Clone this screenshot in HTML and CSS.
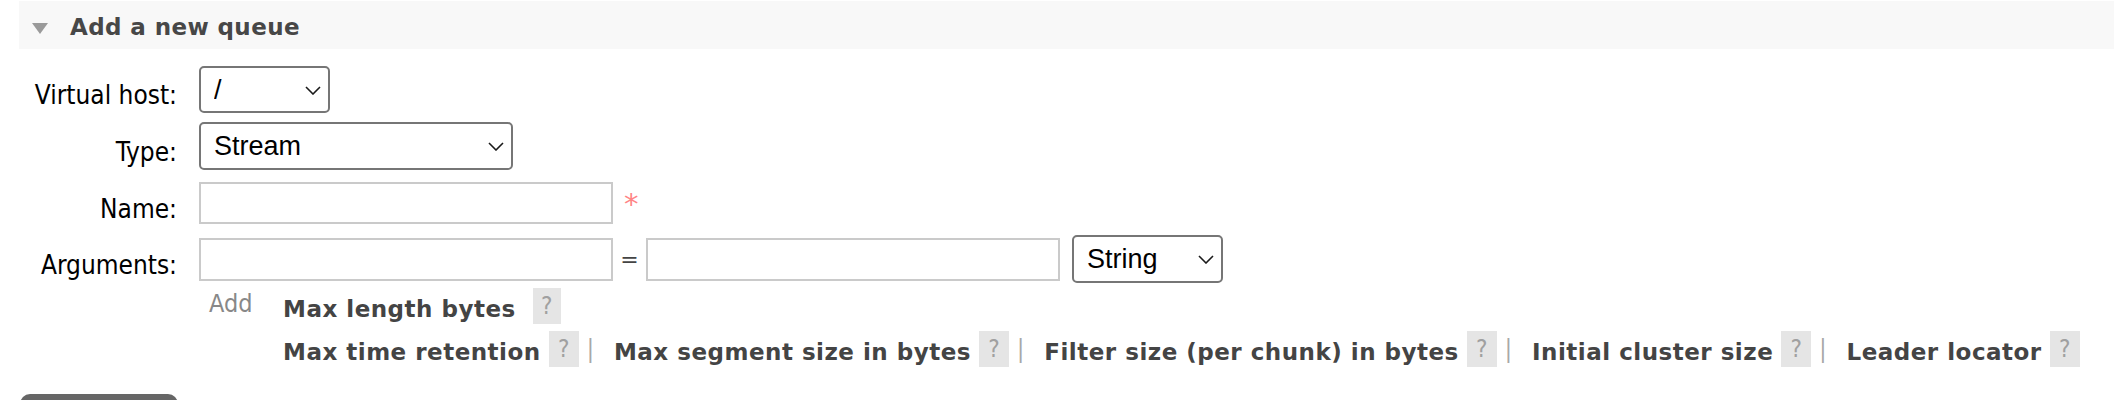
FILE: index.html
```html
<!DOCTYPE html>
<html>
<head>
<meta charset="utf-8">
<title>Add a new queue</title>
<link rel="stylesheet" href="styles.css">
</head>
<body>
<div class="section">
  <div class="section-head">
    <span class="tri"></span>
    <h2 class="title">Add a new queue</h2>
  </div>
  <form class="form">
    <div class="row row-vhost">
      <label class="lbl">Virtual host:</label>
      <span class="sel sel-vhost">
        <select><option>/</option></select>
        <svg class="chev" viewBox="0 0 16 9" width="16" height="9"><path d="M1 1 L8 8 L15 1"/></svg>
      </span>
    </div>
    <div class="row row-type">
      <label class="lbl">Type:</label>
      <span class="sel sel-type">
        <select><option>Stream</option><option>Classic</option><option>Quorum</option></select>
        <svg class="chev" viewBox="0 0 16 9" width="16" height="9"><path d="M1 1 L8 8 L15 1"/></svg>
      </span>
    </div>
    <div class="row row-name">
      <label class="lbl">Name:</label>
      <input class="inp" type="text">
      <span class="req">*</span>
    </div>
    <div class="row row-args">
      <label class="lbl">Arguments:</label>
      <input class="inp" type="text">
      <span class="eq">=</span>
      <input class="inp" type="text">
      <span class="sel sel-string">
        <select><option>String</option><option>Number</option><option>Boolean</option><option>List</option></select>
        <svg class="chev" viewBox="0 0 16 9" width="16" height="9"><path d="M1 1 L8 8 L15 1"/></svg>
      </span>
    </div>
    <div class="links-row">
      <span class="add">Add</span>
      <div class="links">
        <div class="line line-1">
          <span class="arg">Max length bytes</span><span class="help help-wide">?</span>
        </div>
        <div class="line line-2">
          <span class="arg">Max time retention</span><span class="help">?</span><span class="sep">|</span>
          <span class="arg">Max segment size in bytes</span><span class="help">?</span><span class="sep">|</span>
          <span class="arg">Filter size (per chunk) in bytes</span><span class="help">?</span><span class="sep">|</span>
          <span class="arg">Initial cluster size</span><span class="help">?</span><span class="sep">|</span>
          <span class="arg">Leader locator</span><span class="help">?</span>
        </div>
      </div>
    </div>
    <button class="btn" type="button">Add queue</button>
  </form>
</div>
</body>
</html>
```

FILE: styles.css
```css
html, body {
  margin: 0;
  padding: 0;
  background: #fff;
}

body {
  font-family: "DejaVu Sans Condensed", "DejaVu Sans", Verdana, sans-serif;
  font-stretch: condensed;
  color: #000;
  overflow: hidden;
}

.section {
  padding: 1px 0 0 19px;
}

.section-head {
  display: flex;
  align-items: center;
  height: 48px;
  background: #f8f8f8;
}

.tri {
  width: 0;
  height: 0;
  margin: 6px 0 0 13px;
  border-left: 8px solid transparent;
  border-right: 8px solid transparent;
  border-top: 11px solid #9a9a9a;
}

.title {
  margin: 4px 0 0 22px;
  font-family: "DejaVu Sans", Verdana, sans-serif;
  font-stretch: normal;
  font-weight: bold;
  font-size: 23px;
  letter-spacing: 0.4px;
  color: #474747;
}

.form {
  margin: 0;
}

.row {
  display: flex;
  align-items: center;
}

.row-vhost { margin-top: 17px; height: 47px; }
.row-type  { margin-top: 9px;  height: 48px; }
.row-name  { margin-top: 12px; height: 42px; }
.row-args  { margin-top: 11px; height: 48px; }

.lbl {
  width: 158px;
  margin-right: 22px;
  padding-top: 11px;
  text-align: right;
  font-size: 26px;
  line-height: 30px;
  flex: none;
}

.sel {
  position: relative;
  display: inline-flex;
  flex: none;
}

.sel select {
  -webkit-appearance: none;
  appearance: none;
  margin: 0;
  padding: 0 30px 0 13px;
  border: 2px solid #767676;
  border-radius: 5px;
  background: #fff;
  color: #000;
  font-family: "Liberation Sans", Arial, sans-serif;
  font-stretch: normal;
  font-size: 27px;
  text-align: left;
}

.sel-vhost select { width: 131px; height: 47px; }
.sel-type select { width: 314px; height: 48px; }
.sel-string select { width: 151px; height: 48px; }

.chev {
  position: absolute;
  right: 9px;
  top: 50%;
  margin-top: -4px;
  fill: none;
  stroke: #1a1a1a;
  stroke-width: 1.6;
  pointer-events: none;
}

.inp {
  box-sizing: border-box;
  width: 414px;
  height: 43px;
  margin: 0;
  padding: 0 8px;
  border: 2px solid #cacaca;
  border-radius: 0;
  background: #fff;
  font-size: 22px;
  flex: none;
}

.row-name .inp { height: 42px; }

.req {
  margin-left: 11px;
  margin-top: 2px;
  color: #ff8585;
  font-family: "DejaVu Sans", sans-serif;
  font-stretch: normal;
  font-size: 29px;
}

.eq {
  width: 33px;
  text-align: center;
  color: #444;
  font-family: "DejaVu Sans", sans-serif;
  font-stretch: normal;
  font-size: 22px;
}

.sel-string {
  margin-left: 12px;
}

.links-row {
  display: flex;
  align-items: flex-start;
  margin: 5px 0 0 180px;
}

.add {
  margin: 1px 0 0 10px;
  width: 74px;
  flex: none;
  color: #888;
  font-size: 25px;
  line-height: 29px;
}

.links {
  display: flex;
  flex-direction: column;
  row-gap: 7px;
}

.line {
  display: flex;
  align-items: center;
  height: 36px;
  white-space: nowrap;
}

.arg {
  font-family: "DejaVu Sans", Verdana, sans-serif;
  font-stretch: normal;
  font-weight: bold;
  font-size: 23px;
  letter-spacing: 0.5px;
  color: #444;
  padding-top: 5px;
}

.help {
  display: inline-flex;
  align-items: center;
  justify-content: center;
  width: 30px;
  height: 36px;
  margin-left: 8px;
  background: #e5e5e5;
  color: #a0a0a0;
  font-size: 24px;
}

.help-wide {
  width: 28px;
  margin-left: 17px;
}

.sep {
  margin: 0 20px 0 8px;
  color: #a8a8a8;
  font-size: 24px;
}

.btn {
  display: block;
  margin: 27px 0 0 1px;
  width: 158px;
  height: 44px;
  border: 0;
  border-radius: 10px;
  background: #666;
  color: #fff;
  font-family: "DejaVu Sans", sans-serif;
  font-weight: bold;
  font-size: 20px;
  padding-top: 14px;
}
```
